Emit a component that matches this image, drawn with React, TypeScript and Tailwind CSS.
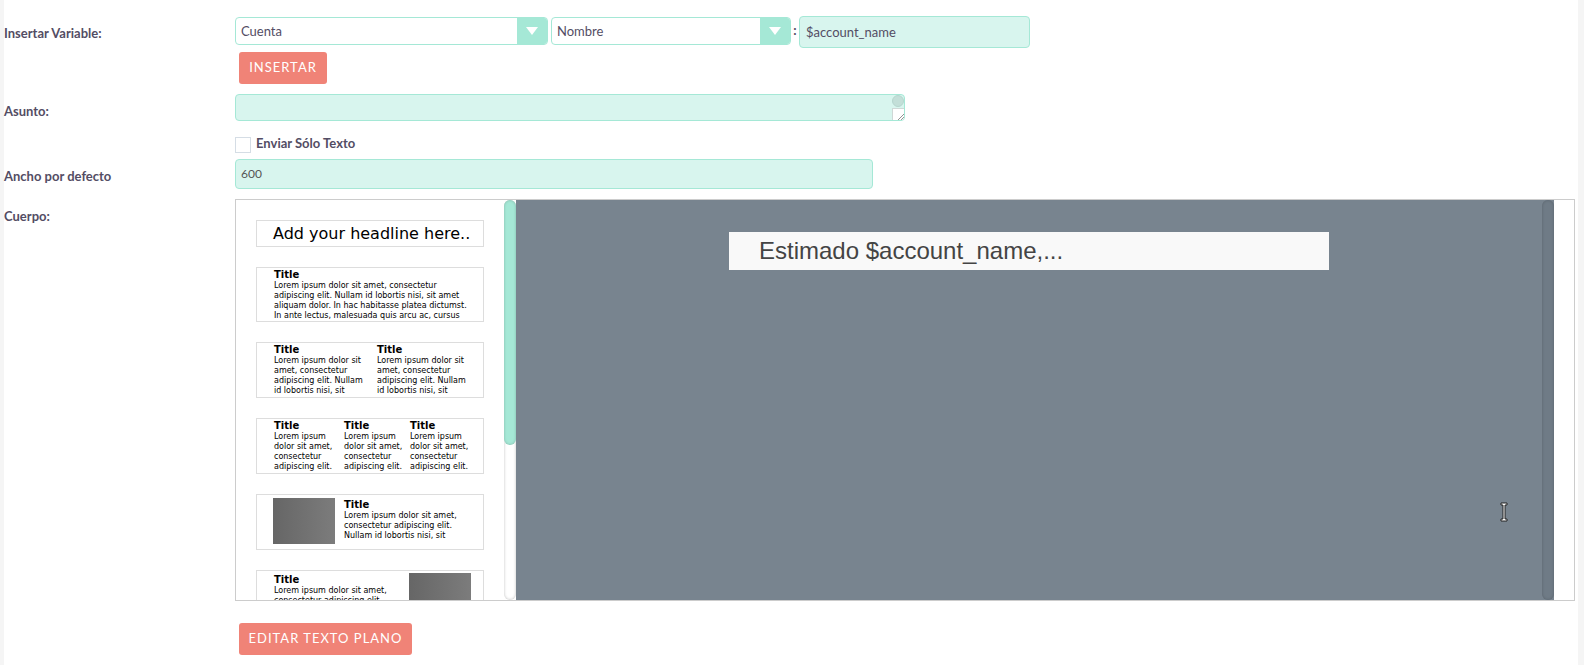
const lorem2 = ['Lorem ipsum dolor sit', 'amet, consectetur', 'adipiscing elit. Nullam', 'id lobortis nisi, sit'];
const lorem3 = ['Lorem ipsum', 'dolor sit amet,', 'consectetur', 'adipiscing elit.'];

function Arrow() {
  return (
    <div className="flex w-[30px] shrink-0 items-center justify-center bg-[#a5e8d6]">
      <svg width="12" height="8" viewBox="0 0 12 8">
        <path d="M0 0h12L6 8z" fill="#fff" />
      </svg>
    </div>
  );
}

function Select({ label, className }: { label: string; className: string }) {
  return (
    <div className={`flex h-[28px] overflow-hidden rounded-[4px] border border-[#a5e8d6] bg-white ${className}`}>
      <div className="flex-1 pl-[5px] text-[13px] leading-[27px] text-[#534d64]">{label}</div>
      <Arrow />
    </div>
  );
}

function Label({ children, className = '' }: { children: string; className?: string }) {
  return (
    <div className={`w-[231px] shrink-0 text-[13px] leading-[20px] font-bold text-[#534d64] ${className}`}>{children}</div>
  );
}

function Button({ children, className = '' }: { children: string; className?: string }) {
  return (
    <button className={`ml-[4px] h-[32px] rounded-[3px] bg-[#f08377] text-[13px] tracking-[1px] text-white ${className}`}>
      {children}
    </button>
  );
}

function Column({ lines, className = '' }: { lines: string[]; className?: string }) {
  return (
    <div className={`shrink-0 ${className}`}>
      <div className="mt-[1px] mb-[1px] text-[10px] leading-[11px] font-bold text-black">Title</div>
      {lines.map((line) => (
        <div key={line} className="text-[8px] leading-[10px] whitespace-nowrap text-black">
          {line}
        </div>
      ))}
    </div>
  );
}

function Card({ children, className = '' }: { children: React.ReactNode; className?: string }) {
  return (
    <div className={`flex w-[228px] shrink-0 overflow-hidden border border-[#dddddd] bg-white font-['DejaVu_Sans',sans-serif] ${className}`}>
      {children}
    </div>
  );
}

function Thumb() {
  return <div className="h-[46px] w-[62px] shrink-0 bg-gradient-to-r from-[#666666] to-[#7c7c7c]" />;
}

function TemplateList() {
  return (
    <div className="flex h-full w-[268px] shrink-0 flex-col gap-[20px] overflow-hidden bg-white pt-[20px] pl-[20px]">
      <Card className="h-[27px] items-center pl-[16px]">
        <div className="text-[16px] whitespace-nowrap text-black">Add your headline here..</div>
      </Card>
      <Card className="h-[55px] pl-[17px]">
        <Column
          lines={[
            'Lorem ipsum dolor sit amet, consectetur',
            'adipiscing elit. Nullam id lobortis nisi, sit amet',
            'aliquam dolor. In hac habitasse platea dictumst.',
            'In ante lectus, malesuada quis arcu ac, cursus',
          ]}
        />
      </Card>
      <Card className="h-[56px] pl-[17px]">
        <Column lines={lorem2} className="w-[103px]" />
        <Column lines={lorem2} />
      </Card>
      <Card className="h-[56px] pl-[17px]">
        <Column lines={lorem3} className="w-[70px]" />
        <Column lines={lorem3} className="w-[66px]" />
        <Column lines={lorem3} />
      </Card>
      <Card className="h-[56px] gap-[9px] pt-[3px] pl-[16px]">
        <Thumb />
        <Column lines={['Lorem ipsum dolor sit amet,', 'consectetur adipiscing elit.', 'Nullam id lobortis nisi, sit']} />
      </Card>
      <Card className="h-[56px] justify-between pt-[2px] pr-[12px] pl-[17px]">
        <Column lines={['Lorem ipsum dolor sit amet,', 'consectetur adipiscing elit.']} />
        <Thumb />
      </Card>
    </div>
  );
}

export default function App() {
  return (
    <div className="relative flex h-[665px] w-[1584px] overflow-hidden bg-white font-['Lato',sans-serif]">
      <div className="w-[4px] shrink-0 bg-[#f5f5f5]" />

      <div className="flex w-[1574px] shrink-0 flex-col">
        {/* Insertar variable */}
        <div className="mt-[16px] flex">
          <Label className="pt-[7px]">Insertar Variable:</Label>
          <div className="flex items-start">
            <Select label="Cuenta" className="mt-[1px] w-[313px]" />
            <Select label="Nombre" className="mt-[1px] ml-[3px] w-[240px]" />
            <span className="w-[8px] pt-[5px] text-center text-[13px] font-bold text-[#534d64]">:</span>
            <input
              readOnly
              value="$account_name"
              className="h-[32px] w-[231px] rounded-[4px] border border-[#a5e8d6] bg-[#d8f5ee] pb-[1px] pl-[6px] text-[13px] text-[#534d64]"
            />
          </div>
        </div>

        <div className="mt-[4px] pl-[231px]">
          <Button className="w-[88px]">INSERTAR</Button>
        </div>

        {/* Asunto */}
        <div className="mt-[10px] flex">
          <Label className="pt-[7px]">Asunto:</Label>
          <div className="flex h-[27px] w-[670px] justify-end overflow-hidden rounded-[4px] border border-[#a5e8d6] bg-[#d8f5ee]">
            <div className="flex w-[12px] flex-col">
              <div className="h-[12px] rounded-full border border-[#b5d5cd] bg-[#c3dfd8]" />
              <div className="relative mt-[1px] flex-1 border-t border-l border-[#cfd8d6] bg-white">
                <svg className="absolute right-0 bottom-0" width="7" height="7" viewBox="0 0 7 7">
                  <path d="M1 7 7 1M4 7l3-3" stroke="#777" strokeWidth="0.8" />
                </svg>
              </div>
            </div>
          </div>
        </div>

        <div className="mt-[16px] flex h-[16px] items-center pl-[231px]">
          <div className="h-[16px] w-[16px] shrink-0 border border-[#d5dde5] bg-white" />
          <span className="mb-[3px] ml-[5px] text-[13px] font-bold text-[#534d64]">Enviar Sólo Texto</span>
        </div>

        {/* Ancho */}
        <div className="mt-[6px] flex">
          <Label className="pt-[7px]">Ancho por defecto</Label>
          <input
            readOnly
            value="600"
            className="h-[30px] w-[638px] rounded-[4px] border border-[#a5e8d6] bg-[#d8f5ee] pb-[1px] pl-[5px] text-[12px] text-[#555555]"
          />
        </div>

        {/* Cuerpo */}
        <div className="mt-[10px] flex">
          <Label className="pt-[7px]">Cuerpo:</Label>
          <div className="flex h-[402px] w-[1340px] overflow-hidden border border-[#cccccc] bg-white">
            <TemplateList />
            <div className="w-[12px] shrink-0 rounded-[6px] bg-white shadow-[inset_0_0_3px_rgba(0,0,0,0.25)]">
              <div className="h-[245px] rounded-[6px] bg-[#a5e8d6] shadow-[inset_0_0_3px_rgba(0,0,0,0.2)]" />
            </div>
            <div className="flex w-[1038px] shrink-0 bg-[#78848f]">
              <div className="flex flex-1 justify-center pt-[32px]">
                <div className="h-[38px] w-[600px] bg-[#f9f9f9] pl-[30px] font-['Liberation_Sans',sans-serif] text-[24px] leading-[38px] text-[#444444]">
                  Estimado $account_name,...
                </div>
              </div>
              <div className="w-[12px] rounded-[6px] bg-[#6f7b86] shadow-[inset_0_0_3px_rgba(0,0,0,0.2)]" />
            </div>
          </div>
        </div>

        <div className="mt-[22px] pl-[231px]">
          <Button className="w-[173px]">EDITAR TEXTO PLANO</Button>
        </div>
      </div>

      <div className="flex-1 bg-[#f5f5f5]" />

      {/* text cursor */}
      <svg className="absolute top-[502px] left-[1500px]" width="8" height="20" viewBox="0 0 8 20">
        <path d="M1 1h6v2H5v14h2v2H1v-2h2V3H1z" fill="#fff" stroke="#222" strokeWidth="1" />
      </svg>
    </div>
  );
}
